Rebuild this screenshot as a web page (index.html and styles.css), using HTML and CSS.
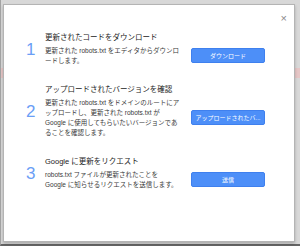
FILE: index.html
```html
<!DOCTYPE html>
<html lang="ja">
<head>
    <meta charset="UTF-8">
    <title>robots.txt を送信</title>
    <link rel="stylesheet" href="styles.css">
</head>
<body>
    <div class="page">
        <div class="dialog">
            <span class="close">×</span>

            <div class="step">
                <div class="num">1</div>
                <div class="title">更新されたコードをダウンロード</div>
                <div class="desc">更新された robots.txt をエディタからダウンロードします。</div>
                <button class="btn">ダウンロード</button>
            </div>

            <div class="step">
                <div class="num">2</div>
                <div class="title">アップロードされたバージョンを確認</div>
                <div class="desc">更新された robots.txt をドメインのルートにアップロードし、更新された robots.txt が Google に使用してもらいたいバージョンであることを確認します。</div>
                <button class="btn">アップロードされたバ...</button>
            </div>

            <div class="step">
                <div class="num">3</div>
                <div class="title">Google に更新をリクエスト</div>
                <div class="desc">robots.txt ファイルが更新されたことを<br>Google に知らせるリクエストを送信します。</div>
                <button class="btn">送信</button>
            </div>
        </div>
    </div>
</body>
</html>
```

FILE: styles.css
```css
html, body {
    margin: 0;
    padding: 0;
}
body {
    font-family: "Liberation Sans", "Noto Sans CJK JP", sans-serif;
    background: #d8d8d8;
}
.page {
    box-sizing: border-box;
    height: 246px;
    padding: 4px 5px 0 2px;
    border-left: 1px solid #a4a4a4;
    border-bottom: 2px solid #666;
    background: linear-gradient(#e6c6c6, #e6c6c6) 0 68px / 100% 10px no-repeat, #d8d8d8;
}
.dialog {
    position: relative;
    box-sizing: border-box;
    width: 292px;
    height: 238px;
    padding: 28px 0 0 22px;
    background: #fff;
    border: 1px solid #b4b4b4;
    box-shadow: 0 2px 3px rgba(0, 0, 0, 0.2);
}
.close {
    position: absolute;
    top: 6px;
    right: 7px;
    font-size: 11px;
    line-height: 14px;
    color: #8a8a8a;
}
.step {
    display: grid;
    grid-template-columns: 19px 137px 74px;
    grid-template-rows: auto auto;
    margin-bottom: 19px;
}
.num {
    grid-row: 1 / 3;
    align-self: center;
    font-size: 17px;
    line-height: 18px;
    color: #6a9ef6;
}
.title {
    grid-column: 2;
    font-size: 7.5px;
    line-height: 10px;
    color: #222;
    margin-bottom: 3px;
    white-space: nowrap;
}
.desc {
    grid-column: 2;
    grid-row: 2;
    font-size: 6.5px;
    line-height: 10px;
    color: #3a3a3a;
}
.btn {
    grid-column: 3;
    grid-row: 2;
    align-self: center;
    margin-left: 9px;
    margin-top: -2px;
    width: 74px;
    height: 15px;
    padding: 0 3px;
    font-family: inherit;
    font-size: 6px;
    color: #fff;
    background: #4d8ff8;
    border: 1px solid #3f80ee;
    border-radius: 2px;
    white-space: nowrap;
}
```
